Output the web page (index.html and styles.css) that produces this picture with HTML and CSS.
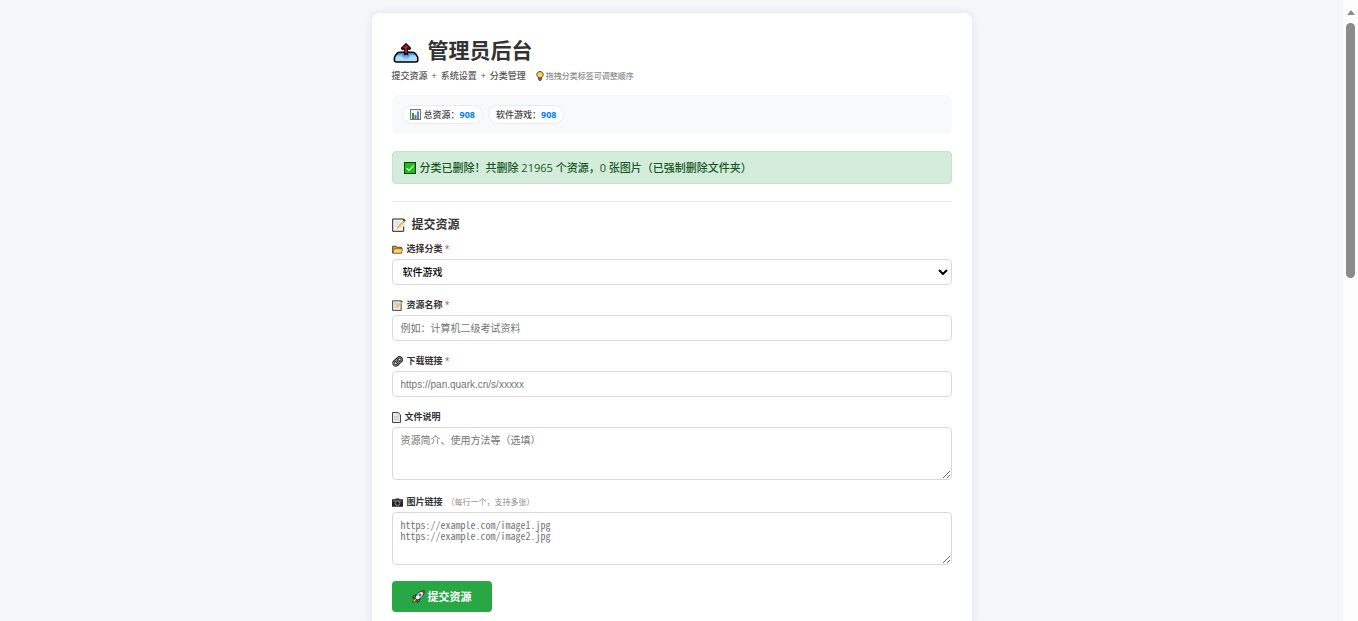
FILE: index.html
```html
<!DOCTYPE html>
<html lang="zh-CN">
<head>
<meta charset="utf-8">
<title>管理员后台</title>
<link rel="stylesheet" href="styles.css">
</head>
<body>
<div class="viewport">
  <main class="page">
    <div class="card">
      <header>
        <h1 class="title">
          <svg class="icon-title" viewBox="0 0 28 28" aria-hidden="true">
            <path d="M7.500 15.200h13q2 0 3 1.500l1.500 2.300q.8 1 .8 2.200v1.800q0 2-2 2H4.400q-2 0-2-2v-1.800q0-1.200.8-2.200l1.500-2.300q1-1.500 2.800-1.500z" fill="#b3dcf5"/>
            <path d="M7.500 15.500h13q1.800 0 2.600 1.500l.8 1.500H18q-1 3-4 3t-4-3H4.300L5.100 17q.8-1.500 2.400-1.500z" fill="#3a8fdf"/>
            <path d="M4.500 19.500q.5-2 5.500-2 1 3.500 4 3.500t4-3.500q5 0 5.500 2z" fill="#8cc6f2"/>
            <path d="M7.500 15.200h13q2 0 3 1.500l1.500 2.300q.8 1 .8 2.200v1.800q0 2-2 2H4.400q-2 0-2-2v-1.800q0-1.200.8-2.200l1.500-2.300q1-1.500 2.800-1.500z" fill="none" stroke="#000" stroke-width="1.500"/>
            <path d="M14 6.800l4.500 4.500-1 1.200-2-1.200V17h-3v-5.700l-2 1.200-1-1.200z" fill="#e81224" stroke="#000" stroke-width="1.300" stroke-linejoin="round"/>
          </svg>
          <span>管理员后台</span>
        </h1>
        <p class="subtitle">
          <span class="topics"><span>提交资源</span><span>+</span><span>系统设置</span><span>+</span><span>分类管理</span></span>
          <span class="tip">
            <svg class="icon-bulb" viewBox="0 0 8 10" aria-hidden="true">
              <path d="M4 .6c2 0 3.200 1.300 3.200 3 0 1.500-1.400 2.100-1.600 3.400H2.400C2.200 5.700.8 5.100.8 3.600c0-1.700 1.200-3 3.200-3z" fill="#ffd05c" stroke="#3b3021" stroke-width=".9"/>
              <path d="M2.500 7.200h3v1.500L4.700 9.500H3.300l-.8-.8z" fill="#777" stroke="#222" stroke-width=".6"/>
            </svg>
            拖拽分类标签可调整顺序
          </span>
        </p>
      </header>

      <div class="stats">
        <span class="pill">
          <svg class="icon-small" viewBox="0 0 11 11" aria-hidden="true">
            <rect x=".5" y=".5" width="10" height="10" fill="#f4f4f4" stroke="#777"/>
            <path d="M2 4h2v6H2z" fill="#16a34a"/><path d="M4.500 6h2v4h-2z" fill="#e74856"/><path d="M7 2.500h2V10H7z" fill="#3a96dd"/>
          </svg>
          <span>总资源：<b>908</b></span>
        </span>
        <span class="pill"><span>软件游戏：<b>908</b></span></span>
      </div>

      <div class="alert" role="status">
        <svg class="icon-alert" viewBox="0 0 12 12" aria-hidden="true">
          <rect x=".5" y=".5" width="11" height="11" fill="#16c60c" stroke="#123d12"/>
          <path d="M2.700 6.200l2.300 2.300 4.500-4.800" fill="none" stroke="#fff" stroke-width="1.200"/>
        </svg>
        <span>分类已删除！共删除 21965 个资源，0 张图片（已强制删除文件夹）</span>
      </div>

      <form class="section">
        <h2 class="section-title">
          <svg class="icon-section" viewBox="0 0 14 14" aria-hidden="true">
            <path d="M.7 1h11v12.300H.7z" fill="#f2f2f2" stroke="#222"/>
            <path d="M3 4h5M3 6h4M3 8h2" stroke="#ccc" stroke-width=".8"/>
            <path d="M11 3.500h1.500v5H11z" fill="#f2f2f2"/>
            <path d="M5 10.500l.6-1.700L11.500 2.600l1.200 1.100-6 6.100z" fill="#f7c65a" stroke="#b88a3a" stroke-width=".4"/>
            <path d="M11.400 2.200l1.100-1.200 1.300 1.400-1 1.100z" fill="#333"/>
          </svg>
          <span>提交资源</span>
        </h2>

        <div class="field">
          <label for="category">
            <svg class="icon-small" viewBox="0 0 11 11" aria-hidden="true">
              <path d="M.6 9V2.200h3.600l1 1.100h4.300V9z" fill="#d59b2d" stroke="#3c2c10" stroke-width=".8"/>
              <path d="M1 9.200l1.200-4.500h8.400L9.500 9.200z" fill="#ffd36b" stroke="#5c4518" stroke-width=".6"/>
            </svg>
            <span>选择分类 <i>*</i></span>
          </label>
          <div class="select-wrap">
            <select id="category" class="control"><option>软件游戏</option></select>
            <svg class="chevron" viewBox="0 0 10 6" aria-hidden="true"><path d="M1 1l4 4 4-4" fill="none" stroke="#000" stroke-width="2"/></svg>
          </div>
        </div>

        <div class="field">
          <label for="name">
            <svg class="icon-small" viewBox="0 0 14 14" aria-hidden="true">
              <path d="M.7 1h11v12.300H.7z" fill="#e6e6e6" stroke="#444" stroke-width="1.200"/>
              <path d="M3 4h5M3 6h4M3 8h2" stroke="#bbb"/>
              <path d="M4.500 10.500l.8-2.200L11.500 2l1.600 1.500-6.300 6.200z" fill="#f7b84a"/>
              <path d="M11.200 2l1.200-1.200 1.400 1.500-1 1z" fill="#333"/>
            </svg>
            <span>资源名称 <i>*</i></span>
          </label>
          <input id="name" class="control" type="text" placeholder="例如：计算机二级考试资料">
        </div>

        <div class="field">
          <label for="link">
            <svg class="icon-small" viewBox="0 0 11 11" aria-hidden="true">
              <g fill="none" transform="rotate(-43 5.5 5.5)">
                <g stroke="#222" stroke-width="2.400"><rect x=".8" y="3.200" width="5.800" height="4.600" rx="2.300"/><rect x="4.600" y="3.200" width="5.800" height="4.600" rx="2.300"/></g>
                <g stroke="#aaa" stroke-width=".7"><rect x=".8" y="3.200" width="5.800" height="4.600" rx="2.300"/><rect x="4.600" y="3.200" width="5.800" height="4.600" rx="2.300"/></g>
              </g>
            </svg>
            <span>下载链接 <i>*</i></span>
          </label>
          <input id="link" class="control" type="text" placeholder="https://pan.quark.cn/s/xxxxx">
        </div>

        <div class="field">
          <label for="desc">
            <svg class="icon-page" viewBox="0 0 9 11" aria-hidden="true">
              <path d="M.5.5h5.700l2.300 2.300v7.700h-8z" fill="#e9e9e9" stroke="#333" stroke-width=".9"/>
              <path d="M6 .7V3h2.300M2 4.500h5M2 6.200h5M2 7.900h5" fill="none" stroke="#bbb" stroke-width=".6"/>
            </svg>
            <span>文件说明</span>
          </label>
          <textarea id="desc" class="control area" placeholder="资源简介、使用方法等（选填）"></textarea>
        </div>

        <div class="field">
          <label for="images">
            <svg class="icon-small" viewBox="0 0 11 11" aria-hidden="true">
              <path d="M0 2.300h3.300l.6-.7h3.200l.6.700H11v7.400H0z" fill="#222"/>
              <path d="M.8 4h9.400" stroke="#999" stroke-width=".8"/>
              <circle cx="5.500" cy="6.200" r="2.500" fill="#444" stroke="#999" stroke-width=".7"/><circle cx="5.500" cy="6.200" r="1" fill="#111"/>
            </svg>
            <span>图片链接</span>
            <small>（每行一个，支持多张）</small>
          </label>
          <textarea id="images" class="control area" placeholder="https://example.com/image1.jpg&#10;https://example.com/image2.jpg"></textarea>
        </div>

        <button class="submit" type="button">
          <svg class="icon-rocket" viewBox="0 0 13 13" aria-hidden="true">
            <path d="M4.300 5L1.800 5.600.7 8l2.500-.2zM8 8.700l-.6 2.500L5 12.300l.2-2.500z" fill="#28a8ea" stroke="#111" stroke-width=".8"/>
            <path d="M3.300 8.300L1 10.300.7 12.300l2-.3 2-2.300z" fill="#ffb02e" stroke="#111" stroke-width=".6"/>
            <path d="M3 7.800C4.500 4 7.500 1 12.300.7 12 5.500 9 8.500 5.200 10z" fill="#f3f3f3" stroke="#111" stroke-width=".8"/>
            <path d="M9.200 1.300q1.500-.5 3.100-.6-.1 1.600-.6 3.100z" fill="#e81224"/>
            <circle cx="8" cy="5" r="1.200" fill="#3a96dd" stroke="#333" stroke-width=".5"/>
          </svg>
          <span>提交资源</span>
        </button>
      </form>
    </div>
  </main>
  <div class="scrollbar" aria-hidden="true">
    <div class="scroll-arrow"></div>
    <div class="scroll-thumb"></div>
  </div>
</div>
</body>
</html>
```
FILE: styles.css
```css
* { box-sizing: border-box; }

body {
  margin: 0;
  background: #f5f7fb;
  color: #333;
  font-family: "Open Sans", "Noto Sans CJK SC", sans-serif;
}

h1, h2, p { margin: 0; }
svg { flex: none; display: block; }

.viewport { display: flex; height: 100vh; overflow: hidden; }

.page { flex: 1; padding: 13px 20px 0; }

.card {
  max-width: 600px;
  min-height: 100vh;
  margin: 0 auto;
  padding: 20px;
  background: #fff;
  border-radius: 8px;
  box-shadow: 0 0 10px rgba(30, 40, 90, .1);
}

.title {
  display: flex;
  align-items: center;
  gap: 8px;
  font-size: 21px;
  line-height: 35px;
  font-weight: 600;
}
.icon-title { width: 28px; height: 28px; }

.subtitle {
  display: flex;
  align-items: center;
  gap: 10px;
  color: #555;
  font-size: 9px;
  line-height: 15px;
  font-weight: 500;
}
.topics { display: flex; gap: 4px; }
.tip { display: flex; align-items: center; gap: 2px; color: #8c8c8c; font-size: 8px; }
.icon-bulb { width: 8px; height: 10px; }

.stats {
  display: flex;
  flex-wrap: wrap;
  gap: 5px;
  margin-top: 12px;
  padding: 10px;
  background: #f8f9fa;
  border-radius: 5px;
}
.pill {
  display: flex;
  align-items: center;
  gap: 3px;
  padding: 0 7px;
  background: #fff;
  border: 1px solid #e9ecef;
  border-radius: 10px;
  color: #444;
  font-size: 9px;
  line-height: 17px;
  font-weight: 500;
}
.pill b { color: #007bff; }

.alert {
  display: flex;
  align-items: center;
  gap: 4px;
  margin-top: 17px;
  padding: 8px 11px;
  background: #d4edda;
  border: 1px solid #c3e6cb;
  border-radius: 4px;
  color: #155724;
  font-size: 11px;
  line-height: 15px;
  font-weight: 500;
}
.icon-alert { width: 12px; height: 12px; }

.section {
  margin-top: 17px;
  padding-top: 15px;
  border-top: 1px solid #e9e9e9;
}
.section-title {
  display: flex;
  align-items: center;
  gap: 6px;
  margin-bottom: 10px;
  font-size: 12px;
  line-height: 16px;
  font-weight: 600;
}
.icon-section { width: 14px; height: 14px; }

.field { margin-bottom: 14px; }
.field label {
  display: flex;
  align-items: center;
  gap: 4px;
  margin-bottom: 4px;
  font-size: 9px;
  line-height: 12px;
  font-weight: 700;
}
.field i { color: #e03545; font-style: normal; font-weight: 400; }
.field small { color: #8c8c8c; font-size: 8px; font-weight: 400; }
.icon-small { width: 11px; height: 11px; }
.icon-page { width: 9px; height: 11px; }

.control {
  display: block;
  width: 100%;
  height: 26px;
  padding: 0 8px;
  border: 1px solid #d9d9d9;
  border-radius: 4px;
  background: #fff;
  font-family: "Liberation Sans", "Noto Sans CJK SC", sans-serif;
  font-size: 10px;
}
.control::placeholder { color: #757575; }

.select-wrap { display: grid; align-items: center; }
.select-wrap > * { grid-area: 1 / 1; }
select.control { appearance: none; padding: 0 10px; color: #000; font-weight: 500; }
.chevron { justify-self: end; width: 10px; height: 6px; margin-right: 4px; pointer-events: none; }

.area {
  height: 53px;
  margin-bottom: 16px;
  padding: 6px 8px;
  font-family: "Noto Sans Mono CJK SC", "Liberation Mono", "Noto Sans CJK SC", monospace;
  line-height: 11px;
  resize: vertical;
}

.submit {
  display: flex;
  align-items: center;
  gap: 3px;
  padding: 8px 20px;
  border: 0;
  border-radius: 4px;
  background: #28a745;
  color: #fff;
  font-family: inherit;
  font-size: 11px;
  line-height: 15px;
  font-weight: 700;
}
.icon-rocket { width: 13px; height: 13px; }

.scrollbar {
  display: flex;
  flex-direction: column;
  align-items: center;
  width: 15px;
  padding-top: 10px;
  background: #fcfcfc;
}
.scroll-arrow {
  border: 4px solid transparent;
  border-top: 0;
  border-bottom: 5px solid #8b8b8b;
}
.scroll-thumb {
  width: 9px;
  height: 41vh;
  margin-top: 8px;
  border-radius: 5px;
  background: #8b8b8b;
}
```
